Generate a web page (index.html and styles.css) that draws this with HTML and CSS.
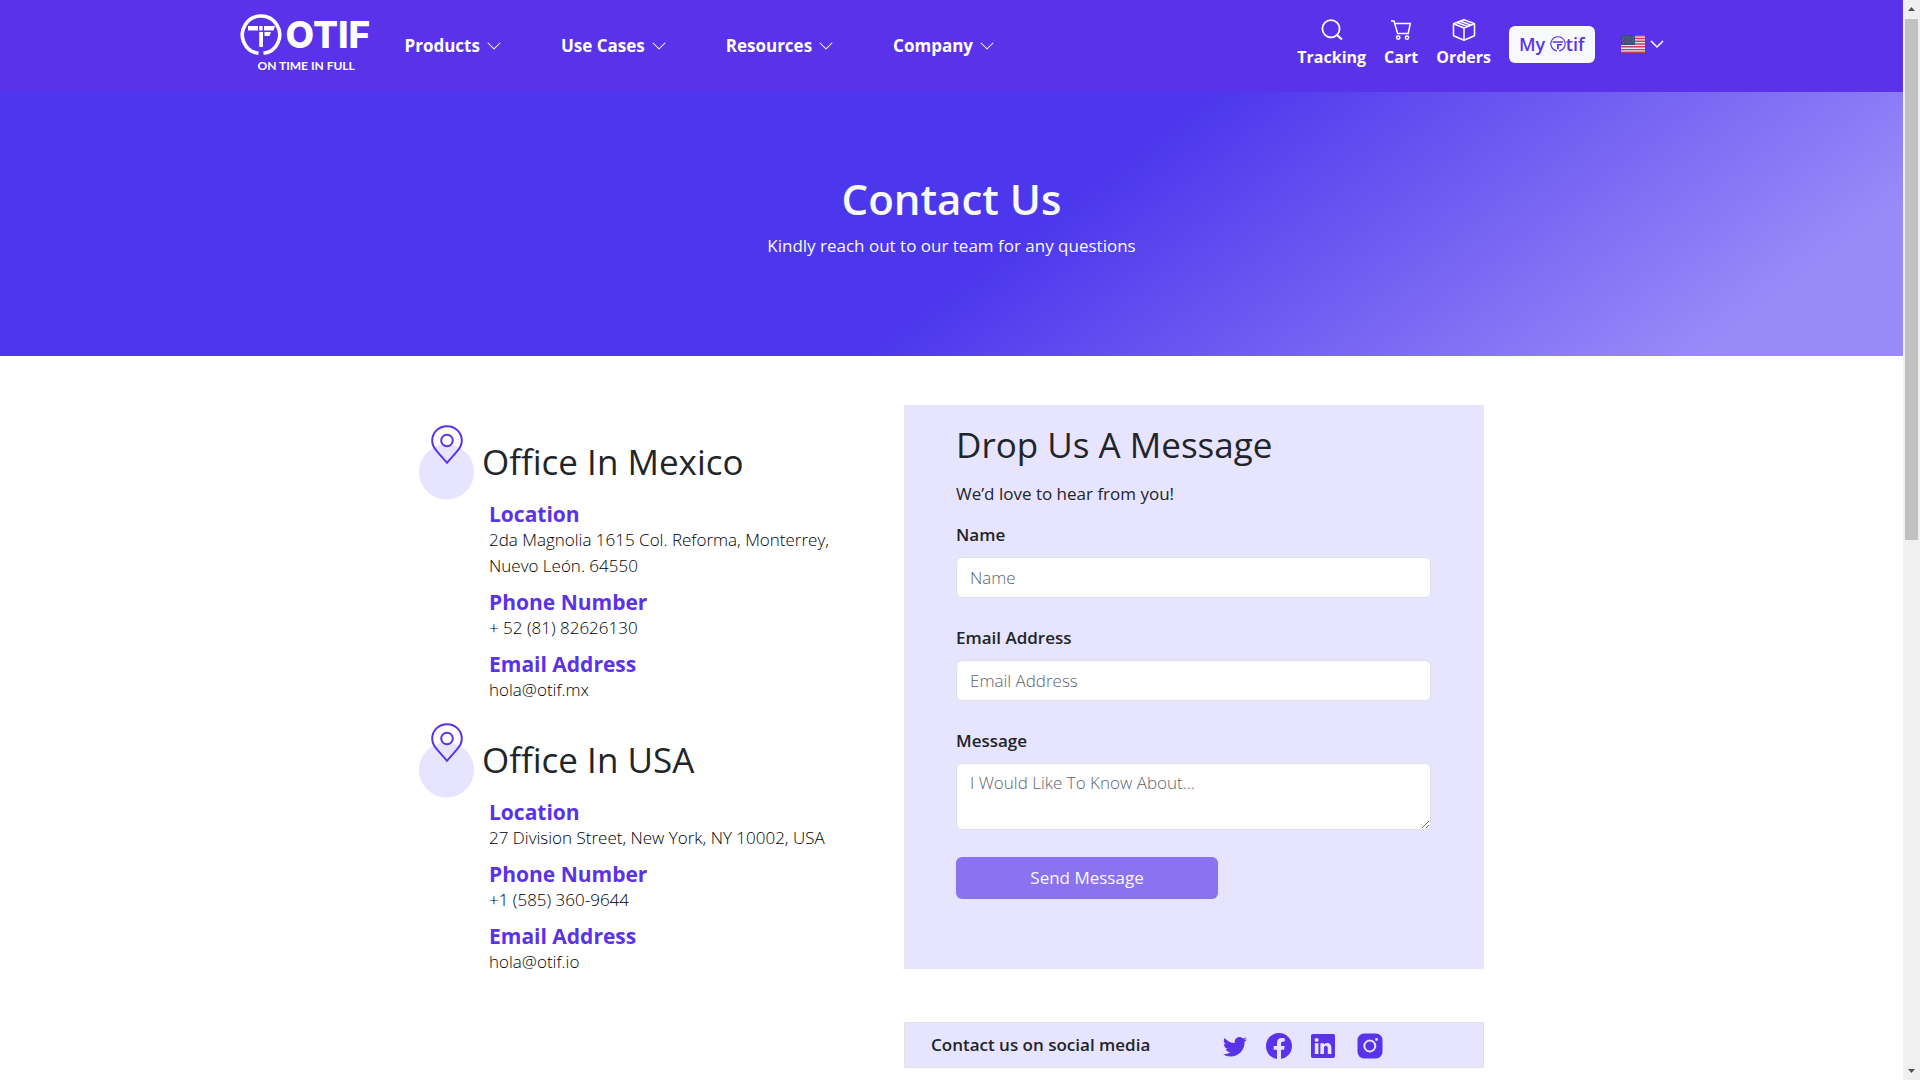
FILE: index.html
```html
<!DOCTYPE html>
<html lang="en">
<head>
<meta charset="utf-8">
<meta name="viewport" content="width=device-width, initial-scale=1">
<title>Contact Us</title>
<link rel="stylesheet" href="styles.css">
</head>
<body>
<svg class="sprite" aria-hidden="true">
  <symbol id="chevron" viewBox="0 0 16 16"><path fill="currentColor" fill-rule="evenodd" d="M1.646 4.646a.5.5 0 0 1 .708 0L8 10.293l5.646-5.647a.5.5 0 0 1 .708.708l-6 6a.5.5 0 0 1-.708 0l-6-6a.5.5 0 0 1 0-.708z"/></symbol>
  <symbol id="mark" viewBox="0 0 42 42">
    <path d="M18.500 39.300A18.700 18.700 0 1 1 23.500 39.300" fill="none" stroke="currentColor" stroke-width="3.600"/>
    <path fill="currentColor" d="M8 12h10v4.500H8zM19.200 12h3.400v4.500h-3.400zM24 12h11l-1.500 4.500H24zM19.200 18h3.800v15h-3.800zM24.500 18H31l-1.500 4h-5z"/>
  </symbol>
  <symbol id="mark-thin" viewBox="0 0 42 42">
    <path d="M18 39A18.700 18.700 0 1 1 24 39" fill="none" stroke="currentColor" stroke-width="3"/>
    <path fill="currentColor" d="M7 14h28l-2 4H7zM18.500 21H32l-2 4h-7v10h-4.500z"/>
  </symbol>
  <symbol id="pin" viewBox="0 0 32 40">
    <path d="M16 1.200c8.300 0 14.800 6.300 14.800 14.500 0 5-2 7.600-5 11L16 37.800 6.200 26.700c-3-3.400-5-6-5-11C1.200 7.500 7.700 1.200 16 1.200z" fill="none" stroke="currentColor" stroke-width="2"/>
    <circle cx="16" cy="15.500" r="5.800" fill="none" stroke="currentColor" stroke-width="2"/>
  </symbol>
</svg>
<div class="window">
  <div class="page">
    <header class="header">
      <div class="header-inner">
        <a class="logo" href="#">
          <span class="logo-main"><svg class="logo-mark"><use href="#mark"/></svg><span class="logo-word">OTIF</span></span>
          <span class="logo-tag">ON TIME IN FULL</span>
        </a>
        <nav class="menu">
          <a href="#">Products <svg class="chev"><use href="#chevron"/></svg></a>
          <a href="#">Use Cases <svg class="chev"><use href="#chevron"/></svg></a>
          <a href="#">Resources <svg class="chev"><use href="#chevron"/></svg></a>
          <a href="#">Company <svg class="chev"><use href="#chevron"/></svg></a>
        </nav>
        <div class="tools">
          <a class="tool" href="#"><svg viewBox="0 0 22 22"><circle cx="10" cy="9.800" r="8.600" fill="none" stroke="currentColor" stroke-width="1.800"/><path d="M16 16l5 4.600" fill="none" stroke="currentColor" stroke-width="2"/></svg>Tracking</a>
          <a class="tool" href="#"><svg viewBox="0 0 22 22"><path d="M1 2h3l3.600 12.500h10.600L20.300 4.500H4.800" fill="none" stroke="currentColor" stroke-width="1.500"/><circle cx="8.200" cy="18.600" r="1.700" fill="none" stroke="currentColor" stroke-width="1.500"/><circle cx="17" cy="18.600" r="1.700" fill="none" stroke="currentColor" stroke-width="1.500"/></svg>Cart</a>
          <a class="tool" href="#"><svg class="box" viewBox="0 0 24 22"><path d="M12 .8l10.500 4v12L12 21.200 1.500 16.800v-12zM1.500 4.800L12 9l10.500-4.200M12 9v12M5 3.500l10.500 4M8.500 2.200l10.500 4" fill="none" stroke="currentColor" stroke-width="1.500" stroke-linejoin="round"/></svg>Orders</a>
          <button class="my-otif" type="button">My <svg aria-label="O"><use href="#mark-thin"/></svg>tif</button>
          <button class="lang" type="button" aria-label="Language">
            <svg class="flag" viewBox="0 0 24 18"><path fill="#e8e4f2" d="M0 0h24v18H0z"/><path d="M0 .7h24M0 3.500h24M0 6.300h24M0 9h24M0 11.800h24M0 14.600h24M0 17.300h24" stroke="#c0405c" stroke-width="1.400"/><path fill="#3c4a7c" d="M0 0h14v10H0z"/><path d="M1 2h13M2 4h12M1 6h13M2 8h12" stroke="#8a95b5" stroke-width=".7" stroke-dasharray="1 1.500"/></svg>
            <svg class="chev-small" viewBox="0 0 14 14"><path d="M1 4l6 6 6-6" fill="none" stroke="currentColor" stroke-width="1.500"/></svg>
          </button>
        </div>
      </div>
    </header>

    <section class="hero">
      <h1>Contact Us</h1>
      <p>Kindly reach out to our team for any questions</p>
    </section>

    <main class="content">
      <div class="offices">
        <section class="office">
          <div class="badge"><svg><use href="#pin"/></svg></div>
          <h2>Office In Mexico</h2>
          <dl>
            <dt>Location</dt><dd>2da Magnolia 1615 Col. Reforma, Monterrey,<br>Nuevo León. 64550</dd>
            <dt>Phone Number</dt><dd>+ 52 (81) 82626130</dd>
            <dt>Email Address</dt><dd>hola@otif.mx</dd>
          </dl>
        </section>
        <section class="office">
          <div class="badge"><svg><use href="#pin"/></svg></div>
          <h2>Office In USA</h2>
          <dl>
            <dt>Location</dt><dd>27 Division Street, New York, NY 10002, USA</dd>
            <dt>Phone Number</dt><dd>+1 (585) 360-9644</dd>
            <dt>Email Address</dt><dd>hola@otif.io</dd>
          </dl>
        </section>
      </div>

      <div class="side">
        <form class="card">
          <h2>Drop Us A Message</h2>
          <p>We’d love to hear from you!</p>
          <div class="field"><label for="name">Name</label><input id="name" type="text" placeholder="Name"></div>
          <div class="field"><label for="email">Email Address</label><input id="email" type="email" placeholder="Email Address"></div>
          <div class="field"><label for="message">Message</label><textarea id="message" placeholder="I Would Like To Know About..."></textarea></div>
          <button class="send" type="button">Send Message</button>
        </form>
        <div class="social">
          <span>Contact us on social media</span>
          <div class="social-links">
            <a href="#" aria-label="Twitter"><svg class="bird" viewBox="0 0 16 16"><path fill="currentColor" d="M5.026 15c6.038 0 9.341-5.003 9.341-9.334 0-.14 0-.282-.006-.422A6.685 6.685 0 0 0 16 3.542a6.658 6.658 0 0 1-1.889.518 3.301 3.301 0 0 0 1.447-1.817 6.533 6.533 0 0 1-2.087.793A3.286 3.286 0 0 0 7.875 6.030a9.325 9.325 0 0 1-6.767-3.429 3.289 3.289 0 0 0 1.018 4.382A3.323 3.323 0 0 1 .640 6.575v.045a3.288 3.288 0 0 0 2.632 3.218 3.203 3.203 0 0 1-.865.115 3.230 3.230 0 0 1-.614-.057 3.283 3.283 0 0 0 3.067 2.277A6.588 6.588 0 0 1 .780 13.580a6.320 6.320 0 0 1-.780-.045A9.344 9.344 0 0 0 5.026 15z"/></svg></a>
            <a href="#" aria-label="Facebook"><svg viewBox="0 0 16 16"><path fill="currentColor" d="M16 8.049c0-4.446-3.582-8.050-8-8.050C3.580 0-.002 3.603-.002 8.050c0 4.017 2.926 7.347 6.750 7.951v-5.625h-2.030V8.050H6.750V6.275c0-2.017 1.195-3.131 3.022-3.131.876 0 1.791.157 1.791.157v1.980h-1.009c-.993 0-1.303.621-1.303 1.258v1.510h2.218l-.354 2.326H9.250V16c3.824-.604 6.750-3.934 6.750-7.951z"/></svg></a>
            <a href="#" aria-label="LinkedIn"><svg class="tile" viewBox="0 0 16 16"><path fill="currentColor" d="M0 1.146C0 .513.526 0 1.175 0h13.650C15.474 0 16 .513 16 1.146v13.708c0 .633-.526 1.146-1.175 1.146H1.175C.526 16 0 15.487 0 14.854V1.146zm4.943 12.248V6.169H2.542v7.225h2.401zm-1.200-8.212c.837 0 1.358-.554 1.358-1.248-.015-.709-.520-1.248-1.342-1.248-.822 0-1.359.540-1.359 1.248 0 .694.521 1.248 1.327 1.248h.016zm4.908 8.212V9.359c0-.216.016-.432.080-.586.173-.431.568-.878 1.232-.878.869 0 1.216.662 1.216 1.634v3.865h2.401V9.250c0-2.220-1.184-3.252-2.764-3.252-1.274 0-1.845.700-2.165 1.193v.025h-.016a5.540 5.540 0 0 1 .016-.025V6.169h-2.400c.030.678 0 7.225 0 7.225h2.400z"/></svg></a>
            <a class="last" href="#" aria-label="Instagram"><svg viewBox="0 0 26 26"><rect x=".5" y=".5" width="25" height="25" rx="6.500" fill="currentColor"/><circle cx="12.800" cy="13" r="5.500" fill="none" stroke="#e7e4ff" stroke-width="2"/><circle cx="19.500" cy="6.500" r="1.400" fill="#e7e4ff"/></svg></a>
          </div>
        </div>
      </div>
    </main>
  </div>
  <div class="scrollbar" aria-hidden="true">
    <svg viewBox="0 0 17 17"><path fill="#505050" d="M5 11h7L8.500 7z"/></svg>
    <div class="track"><div class="thumb"></div></div>
    <svg viewBox="0 0 17 17"><path fill="#505050" d="M5 6h7l-3.500 4z"/></svg>
  </div>
</div>
</body>
</html>
```
FILE: styles.css
```css
* { box-sizing: border-box; }
body {
  margin: 0;
  font-family: "Open Sans", "Noto Sans", sans-serif;
  font-size: 17px;
  line-height: 26px;
  color: #212529;
  background: #fff;
}
h1, h2, p, dl, dd { margin: 0; }
a { color: inherit; text-decoration: none; }
button, input, textarea { font: inherit; }
.sprite { display: none; }

.window { display: flex; height: 100vh; }
.page { flex: 1; min-width: 0; overflow: hidden; }

/* Header */
.header { background: #5a32ea; color: #fff; }
.header-inner {
  display: flex;
  align-items: center;
  max-width: 1424px;
  height: 92px;
  margin: 0 auto;
  font-weight: 700;
}
.logo { display: grid; width: 132px; font-family: Inter, sans-serif; }
.logo-main { display: flex; align-items: center; gap: 4px; height: 40px; }
.logo-mark { flex: none; width: 42px; height: 42px; }
.logo-word { font-size: 37px; font-weight: 800; }
.logo-tag { padding-left: 18px; font-family: Lato, sans-serif; font-size: 12px; line-height: 22px; }
.menu { display: flex; gap: 59px; margin-left: 33px; }
.menu a { display: flex; align-items: center; gap: 6px; white-space: nowrap; }
.chev { width: 16px; height: 16px; }
.tools {
  display: flex;
  align-items: center;
  margin-left: auto;
  padding-bottom: 4px;
  font-size: 16px;
}
.tool { display: grid; justify-items: center; margin-right: 18px; line-height: 24px; }
.tool svg { width: 22px; height: 22px; margin-bottom: 4px; }
.tool .box { width: 24px; }
.my-otif {
  display: flex;
  align-items: center;
  height: 37px;
  padding: 0 10px;
  border: 0;
  border-radius: 6px;
  color: #5a32ea;
  background: #f8f9fc;
  font-weight: 600;
  font-size: 18px;
  white-space: pre;
}
.my-otif svg { width: 16px; height: 16px; }
.lang {
  display: flex;
  align-items: center;
  gap: 5px;
  margin-left: 26px;
  padding: 0;
  border: 0;
  color: #fff;
  background: none;
}
.flag { width: 24px; height: 18px; }
.chev-small { width: 14px; height: 14px; }

/* Hero */
.hero {
  padding: 79px 0 97px;
  text-align: center;
  color: #f8f9fc;
  background: linear-gradient(143deg, #4c37ed 54%, #9a8af8 91%);
}
.hero h1 { font-size: 42px; line-height: 56px; font-weight: 600; }
.hero p { margin-top: 6px; }

/* Content */
.content {
  display: grid;
  grid-template-columns: 485fr 580fr;
  max-width: 1065px;
  margin: 49px auto 0;
}
.offices { display: grid; align-content: start; gap: 20px; padding-top: 20px; }
.office {
  display: grid;
  grid-template-columns: 55px 1fr;
  column-gap: 8px;
}
.badge {
  display: grid;
  justify-items: center;
  align-items: start;
  height: 76px;
  color: #5a32ea;
  background: radial-gradient(circle at 50% 47px, #e7e4ff 27px, transparent 28px);
}
.badge svg { width: 32px; height: 40px; }
h2 { font-size: 35px; line-height: 44px; font-weight: 500; }
.office h2 { padding-top: 15px; }
.office dl { grid-column: 2; padding-left: 7px; }
.office dt { font-size: 21px; line-height: 26px; font-weight: 700; color: #5a32ea; }
.office dd { margin-bottom: 10px; color: #000; font-weight: 300; }
.office dd:last-child { margin-bottom: 0; }

.card { min-height: 564px; padding: 18px 53px 18px 52px; background: #e7e4ff; }
.card p { margin: 14px 0 15px; font-weight: 500; }
.field { display: grid; margin-bottom: 27px; }
.field label { margin-bottom: 9px; font-weight: 600; }
.field input, .field textarea {
  width: 100%;
  height: 41px;
  padding: 6px 13px;
  border: 1px solid #dee2e6;
  border-radius: 6px;
  background: #fff;
  color: #212529;
  font-weight: 300;
}
.field textarea { display: block; height: 67px; resize: vertical; }
::placeholder { color: #5c656d; opacity: 1; }
.send {
  width: 262px;
  height: 42px;
  border: 0;
  border-radius: 6px;
  color: #f8f9fc;
  background: #8b72f1;
}
.social {
  display: flex;
  align-items: center;
  height: 46px;
  margin-top: 53px;
  padding-left: 26px;
  border: 1px solid #dee2e6;
  background: #e7e4ff;
  font-weight: 600;
}
.social-links { display: flex; align-items: center; gap: 19px; margin-left: 73px; padding-top: 2px; color: #5a32ea; }
.social-links svg { display: block; width: 26px; height: 26px; }
.social-links .bird, .social-links .tile { width: 24px; height: 24px; }
.social-links .last { margin-left: 3px; }

/* Scrollbar column */
.scrollbar { display: flex; flex-direction: column; width: 17px; background: #f0f0f0; }
.scrollbar svg { width: 17px; height: 17px; }
.track { flex: 1; padding: 2px; }
.thumb { height: 50%; background: #c1c1c1; }
```
